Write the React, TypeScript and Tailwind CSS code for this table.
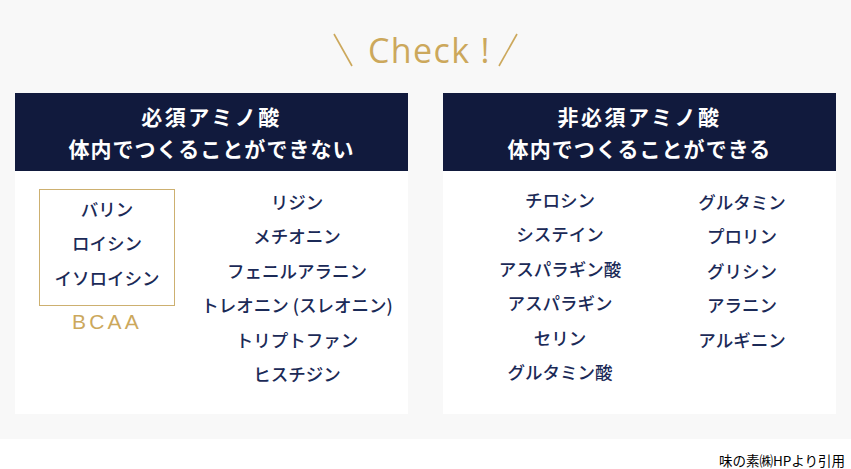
const jp = "font-['Noto_Sans_CJK_JP','Noto_Sans',sans-serif]";

const bcaa = ["バリン", "ロイシン", "イソロイシン"];
const essential = ["リジン", "メチオニン", "フェニルアラニン", "トレオニン (スレオニン)", "トリプトファン", "ヒスチジン"];
const nonA = ["チロシン", "システイン", "アスパラギン酸", "アスパラギン", "セリン", "グルタミン酸"];
const nonB = ["グルタミン", "プロリン", "グリシン", "アラニン", "アルギニン"];

const Item = ({ text }: { text: string }) => (
  <li className="h-[34.4px] leading-[34.4px] text-[17.5px] font-medium text-[#1b2a57] whitespace-nowrap">{text}</li>
);

const Header = ({ top, bottom }: { top: string; bottom: string }) => (
  <div className="h-[78px] bg-[#111a3d] flex flex-col items-center justify-center text-white font-bold text-[21px] leading-[32px]">
    <p className="tracking-[0.12em]">{top}</p>
    <p className="tracking-[0.05em]">{bottom}</p>
  </div>
);

export default function App() {
  return (
    <div className={`w-[851px] min-h-[469px] bg-white ${jp}`}>
      <div className="bg-[#f8f8f8] px-[15px] pb-[25px]">
        <div className="h-[93px] flex items-center justify-center gap-[10px] pt-[6px] text-[#cca85c]">
          <svg width="22" height="34" viewBox="0 0 22 34" className="mr-[4px]">
            <line x1="2" y1="1" x2="20" y2="33" stroke="#cca85c" strokeWidth="1.6" />
          </svg>
          <span className="font-['Open_Sans',sans-serif] text-[34px] leading-none tracking-[0.04em]">Check !</span>
          <svg width="22" height="34" viewBox="0 0 22 34" className="-ml-[4px]">
            <line x1="20" y1="1" x2="2" y2="33" stroke="#cca85c" strokeWidth="1.6" />
          </svg>
        </div>
        <div className="flex gap-[35px]">
          <div className="w-[393px] h-[321px] bg-white">
            <Header top="必須アミノ酸" bottom="体内でつくることができない" />
            <div className="flex pl-[24px]">
              <div className="pt-[18px] flex flex-col items-center">
                <ul className="w-[136px] h-[117px] border border-[#cdb070] pt-[2px] text-center">
                  {bcaa.map((t) => (
                    <Item key={t} text={t} />
                  ))}
                </ul>
                <p className="mt-[4px] font-['Liberation_Sans',sans-serif] text-[21px] leading-[24px] tracking-[0.15em] text-[#cca85c]">BCAA</p>
              </div>
              <ul className="ml-[16px] w-[212px] pt-[14px] text-center">
                {essential.map((t) => (
                  <Item key={t} text={t} />
                ))}
              </ul>
            </div>
          </div>
          <div className="w-[393px] h-[321px] bg-white">
            <Header top="非必須アミノ酸" bottom="体内でつくることができる" />
            <div className="flex pl-[20px]">
              <ul className="w-[194px] pt-[12px] text-center">
                {nonA.map((t) => (
                  <Item key={t} text={t} />
                ))}
              </ul>
              <ul className="w-[170px] pt-[14px] text-center">
                {nonB.map((t) => (
                  <Item key={t} text={t} />
                ))}
              </ul>
            </div>
          </div>
        </div>
      </div>
      <div className="h-[30px] flex justify-end items-end pr-[6px] text-[13.5px] leading-[18px] text-black">
        味の素㈱HPより引用
      </div>
    </div>
  );
}
